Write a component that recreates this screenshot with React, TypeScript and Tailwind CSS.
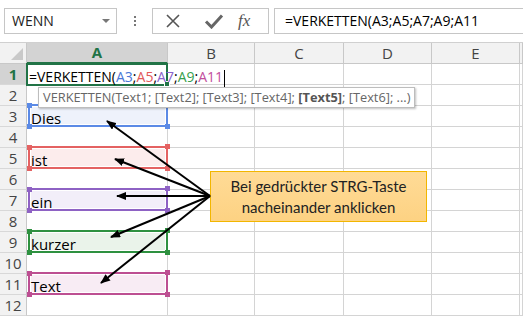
import React from 'react';

const GRID = '#d4d4d4';
const COLS = ['A', 'B', 'C', 'D', 'E', ''];
const ROWS = [1, 2, 3, 4, 5, 6, 7, 8, 9, 10, 11, 12];

type Range = { text: string; border: string; fill: string };

const RANGES: Record<number, Range> = {
  3: { text: 'Dies', border: '#5b8ae6', fill: '#eef2fb' },
  5: { text: 'ist', border: '#e46262', fill: '#fcecec' },
  7: { text: 'ein', border: '#8e62c4', fill: '#f2eef9' },
  9: { text: 'kurzer', border: '#2e9140', fill: '#eaf3ea' },
  11: { text: 'Text', border: '#bd4f92', fill: '#f8ecf4' },
};

const Handle = ({ color, className }: { color: string; className: string }) => (
  <span className={`absolute w-[5px] h-[5px] ${className}`} style={{ background: color }} />
);

const RangeCell = ({ r }: { r: Range }) => (
  <div className="relative h-full">
    <div
      className="absolute left-[1px] right-[-1px] top-[-2px] bottom-[-1px] border-2"
      style={{ borderColor: r.border, background: r.fill, boxShadow: 'inset 0 0 0 1px #fff' }}
    />
    <Handle color={r.border} className="left-[0px] top-[-3px] w-[3px]" />
    <Handle color={r.border} className="right-[-3px] top-[-4px]" />
    <Handle color={r.border} className="left-[0px] bottom-[-3px] w-[3px]" />
    <Handle color={r.border} className="right-[-3px] bottom-[-3px]" />
    <span className="relative pl-[4px] leading-[21px] text-[15px] text-black">{r.text}</span>
  </div>
);

const FormulaText = () => (
  <>
    =VERKETTEN(
    <span className="text-[#4a78d6]">A3</span>;
    <span className="text-[#e25a5a]">A5</span>;
    <span className="text-[#8a63cc]">A7</span>;
    <span className="text-[#36a04c]">A9</span>;
    <span className="text-[#c24e9c]">A11</span>
  </>
);

export default function App() {
  return (
    <div className="relative w-[523px] h-[318px] overflow-hidden bg-white text-[#222]" style={{ fontFamily: '"Open Sans", "Noto Sans", sans-serif' }}>
      {/* formula bar */}
      <div className="flex items-center h-[42px] pt-[1px] pb-[2px]">
        <div className="ml-[4px] w-[113px] h-[26px] border border-[#c6c6c6] flex items-center justify-between pl-[7px] pr-[6px] text-[14px]">
          <span>WENN</span>
          <span className="w-0 h-0 border-l-[4px] border-r-[4px] border-t-[4px] border-l-transparent border-r-transparent border-t-[#777]" />
        </div>
        <div className="w-[35px] flex flex-col items-center gap-[2px]">
          <span className="w-[2px] h-[2px] bg-[#777]" />
          <span className="w-[2px] h-[2px] bg-[#777]" />
          <span className="w-[2px] h-[2px] bg-[#777]" />
        </div>
        <div className="w-[117px] h-[26px] border border-[#c6c6c6] flex items-center">
          <svg width="16" height="16" viewBox="0 0 16 16" className="ml-[12px]">
            <path d="M2 2 L14 14 M14 2 L2 14" stroke="#555" strokeWidth="1.6" />
          </svg>
          <svg width="20" height="16" viewBox="0 0 20 16" className="ml-[23px]">
            <path d="M2 8.5 L7.5 14 L18 2.5" stroke="#666" strokeWidth="3" fill="none" />
          </svg>
          <span className="ml-[14px] italic text-[17px] text-[#555]" style={{ fontFamily: '"Liberation Serif", serif' }}>
            fx
          </span>
        </div>
        <div className="ml-[5px] flex-1 h-[26px] border border-r-0 border-[#c6c6c6] flex items-center pl-[10px] text-[14px] text-black">
          =VERKETTEN(A3;A5;A7;A9;A11
        </div>
      </div>

      {/* sheet */}
      <div className="grid grid-cols-[27px_141px_87px_89px_88px_88px_1fr] grid-rows-[21px] auto-rows-[21px] border-t border-[#d0d0d0]">
        <div className="relative bg-[#f2f2f2] border-r border-b" style={{ borderColor: '#c8c8c8' }}>
          <span className="absolute right-[3px] bottom-[3px] w-0 h-0" style={{ borderBottom: '12px solid #c9c9c9', borderLeft: '12px solid transparent' }} />
        </div>
        {COLS.map((c, i) => (
          <div
            key={c || 'x'}
            className={`flex items-center justify-center text-[15px] border-r ${i === 0 ? 'bg-[#d3d3d3] text-[#217346] font-bold border-b-2' : 'bg-[#f2f2f2] text-[#444] border-b'}`}
            style={{ borderRightColor: '#c8c8c8', borderBottomColor: i === 0 ? '#217346' : '#c8c8c8' }}
          >
            {c}
          </div>
        ))}
        {ROWS.map((r) => (
          <React.Fragment key={r}>
            <div
              className={`flex items-center justify-center text-[15px] border-r border-b ${r === 1 ? 'bg-[#d3d3d3] text-[#217346] font-bold' : 'bg-[#f2f2f2] text-[#444]'}`}
              style={{ borderRightColor: r === 1 ? '#217346' : '#c8c8c8', borderBottomColor: '#d8d8d8' }}
            >
              {r}
            </div>
            {COLS.map((c, i) => (
              <div key={c || 'x'} className="border-r border-b" style={{ borderColor: GRID }}>
                {i === 0 && r === 1 && (
                  <div className="relative h-full">
                    <div className="absolute left-[-1px] right-[-1px] top-[-1px] bottom-[-2px] border-2 border-[#217346] bg-white" />
                    <span className="absolute right-[-3px] bottom-[-3px] w-[6px] h-[6px] bg-[#217346] border border-white" />
                    <span className="relative pl-[2px] leading-[21px] text-[14px] text-black whitespace-nowrap">
                      <FormulaText />
                      <span className="inline-block w-[1px] h-[17px] bg-black align-middle ml-[1px]" />
                    </span>
                  </div>
                )}
                {i === 0 && RANGES[r] && <RangeCell r={RANGES[r]} />}
              </div>
            ))}
          </React.Fragment>
        ))}
      </div>

      {/* function tooltip */}
      <div className="absolute left-[38px] top-[87px] h-[21px] px-[4px] flex items-center bg-white border border-[#bdbdbd] shadow-[1px_1px_2px_rgba(0,0,0,0.25)] text-[12.8px] text-[#666] whitespace-pre">
        VERKETTEN(Text1; [Text2]; [Text3]; [Text4]; <b className="text-[#555]">[Text5]</b>; [Text6]; ...)
      </div>

      {/* callout */}
      <div
        className="absolute left-[210px] top-[171px] w-[217px] h-[51px] border border-[#f2b600] flex flex-col items-center justify-center text-[15px] leading-[21px] text-[#222]"
        style={{ background: 'linear-gradient(#ffdb96, #fdd283)', fontFamily: 'Lato, "Liberation Sans", sans-serif' }}
      >
        <span>Bei gedrückter STRG-Taste</span>
        <span>nacheinander anklicken</span>
      </div>

      {/* arrows */}
      <svg className="absolute left-0 top-0 pointer-events-none" width="523" height="318">
        <defs>
          <marker id="ah" markerWidth="10" markerHeight="8" refX="9" refY="4" orient="auto" markerUnits="userSpaceOnUse">
            <path d="M0 0 L10 4 L0 8 Z" fill="#000" />
          </marker>
        </defs>
        {[
          [107, 121],
          [115, 159],
          [117, 196],
          [111, 237],
          [101, 283],
        ].map(([x, y], i) => (
          <line key={i} x1="210" y1="196" x2={x} y2={y} stroke="#000" strokeWidth="2" markerEnd="url(#ah)" />
        ))}
      </svg>
    </div>
  );
}
